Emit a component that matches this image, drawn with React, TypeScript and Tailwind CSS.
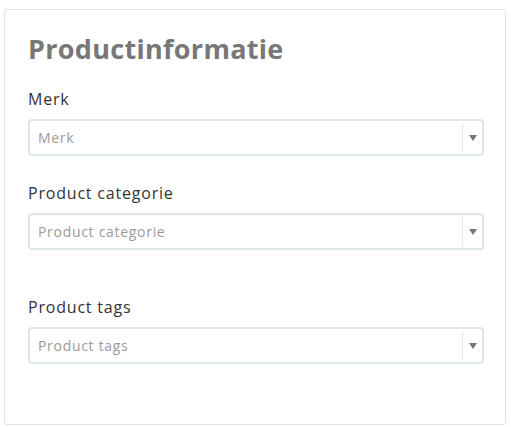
import React from "react";

function SelectBox({ placeholder }: { placeholder: string }) {
  return (
    <div className="flex h-[37px] w-full items-stretch rounded-[4px] border-2 border-[#dde6e9] bg-white">
      <div className="flex flex-1 items-center pl-[8px] text-[14px] tracking-[0.7px] text-[#9a9a9a]">{placeholder}</div>
      <div className="my-[2px] w-px bg-[#dde6e9]" />
      <div className="flex w-[19px] items-center justify-center">
        <svg width="8" height="6" viewBox="0 0 8 6">
          <path d="M0 0 H8 L4 6 Z" fill="#777" />
        </svg>
      </div>
    </div>
  );
}

export default function App() {
  return (
    <div className="h-[427px] w-[511px] bg-white pl-[4px] pt-[9px]" style={{ fontFamily: '"Open Sans", "Noto Sans", sans-serif' }}>
      <div className="h-[416px] w-[502px] rounded-[3px] border border-[#dfe3e8] pl-[23px] pr-[21px]">
        <h1 className="mt-[22px] text-[27px] font-bold leading-[34px] tracking-[0.3px] text-[#777777]">Productinformatie</h1>
        <div className="mt-[22px] text-[16px] leading-[22px] tracking-[0.8px] text-[#333]">Merk</div>
        <div className="mt-[9px]">
          <SelectBox placeholder="Merk" />
        </div>
        <div className="mt-[26px] text-[16px] leading-[22px] tracking-[0.8px] text-[#333]">Product categorie</div>
        <div className="mt-[9px]">
          <SelectBox placeholder="Product categorie" />
        </div>
        <div className="mt-[46px] text-[16px] leading-[22px] tracking-[0.8px] text-[#333]">Product tags</div>
        <div className="mt-[9px]">
          <SelectBox placeholder="Product tags" />
        </div>
      </div>
    </div>
  );
}
